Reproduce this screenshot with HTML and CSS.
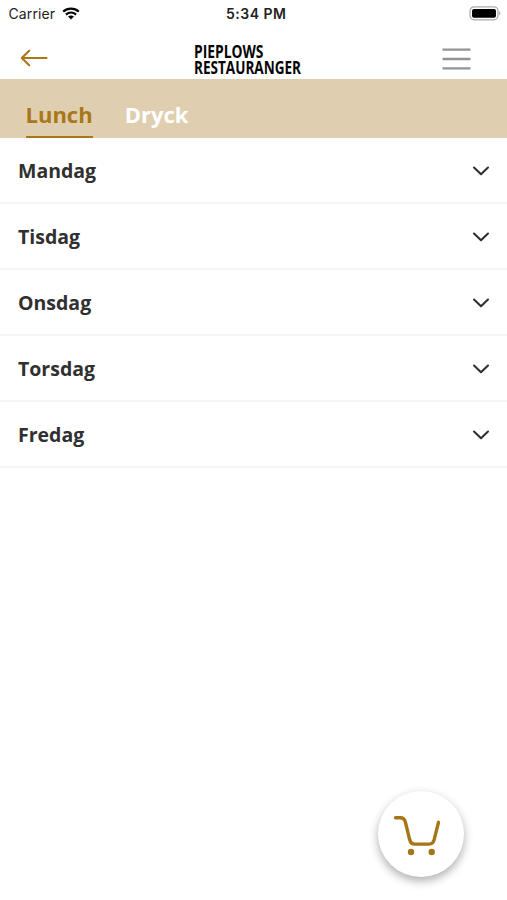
FILE: index.html
```html
<!DOCTYPE html>
<html lang="sv">
<head>
<meta charset="utf-8">
<title>Pieplows Restauranger</title>
<link rel="stylesheet" href="styles.css">
</head>
<body>
<div class="status">
  <div class="carrier"><span>Carrier</span>
    <svg width="18" height="13" viewBox="0 0 18 13" fill="none" stroke="#050505" stroke-width="2.2"><path d="M1.2 4.6C5.6.7 12.4.7 16.8 4.6M3.9 7.6c3-2.6 7.200-2.600 10.200 0"/><path d="M9 12.400 6 9.500c1.700-1.500 4.300-1.500 6 0z" fill="#050505" stroke="none"/></svg>
  </div>
  <div class="time">5:34 PM</div>
  <svg class="battery" width="32" height="15" viewBox="0 0 32 15"><rect x="1" y=".8" width="28" height="13" rx="4" fill="#fff" stroke="#aaa" stroke-width="1.200"/><rect x="3" y="2.900" width="24" height="8.900" rx="2" fill="#000"/><path d="M30.300 5.200c1.400.7 1.400 3.500 0 4.200z" fill="#999"/></svg>
</div>
<header class="header">
  <svg class="back" width="28" height="18" viewBox="0 0 28 18" fill="none" stroke="#a9771a" stroke-width="2.100" stroke-linecap="round" stroke-linejoin="round"><path d="M26.500 9H2M9.200 1.700 1.800 9l7.400 7.300"/></svg>
  <svg class="logo" width="108" height="34" viewBox="0 0 108 34"><text x="0" y="16.300" textLength="69.500" lengthAdjust="spacingAndGlyphs">PIEPLOWS</text><text x="0" y="32.200" textLength="107" lengthAdjust="spacingAndGlyphs">RESTAURANGER</text></svg>
  <svg class="menu" width="29" height="22" viewBox="0 0 29 22"><path d="M.5 1.700h28M.5 11h28M.5 20.300h28" stroke="#939393" stroke-width="2.300"/></svg>
</header>
<nav class="tabs"><span class="tab active">Lunch</span><span class="tab">Dryck</span></nav>
<main>
  <div class="row"><span>Mandag</span><svg class="chev" viewBox="0 0 18 10"><path d="m2 1.500 7 6.700 7-6.700"/></svg></div>
  <div class="row"><span>Tisdag</span><svg class="chev" viewBox="0 0 18 10"><path d="m2 1.500 7 6.700 7-6.700"/></svg></div>
  <div class="row"><span>Onsdag</span><svg class="chev" viewBox="0 0 18 10"><path d="m2 1.500 7 6.700 7-6.700"/></svg></div>
  <div class="row"><span>Torsdag</span><svg class="chev" viewBox="0 0 18 10"><path d="m2 1.500 7 6.700 7-6.700"/></svg></div>
  <div class="row"><span>Fredag</span><svg class="chev" viewBox="0 0 18 10"><path d="m2 1.500 7 6.700 7-6.700"/></svg></div>
</main>
<div class="cart"><svg width="86" height="86" viewBox="0 0 86 86"><path d="M17.500 26.800h4.700c3 0 4.500 1.500 5.200 4.300l4.300 17.700c.8 3 2 4.300 4.800 4.300h14.800c2.800 0 4-1.200 4.800-4.200l4.400-17.600" fill="none" stroke="#a67518" stroke-width="3.400" stroke-linecap="round" stroke-linejoin="round"/><g fill="#a67518"><circle cx="33" cy="61" r="3.200"/><circle cx="53.700" cy="61" r="3.200"/></g></svg></div>
</body>
</html>
```
FILE: styles.css
```css
* { box-sizing: border-box; }
body { margin: 0; height: 900px; overflow: hidden; background: #fff; color: #303030; font-family: "Open Sans", sans-serif; }
svg { display: block; }
.status { height: 28px; display: grid; grid-template-columns: 1fr auto 1fr; align-items: center; padding: 0 6px 1px 8.500px; font-family: Inter, sans-serif; font-size: 14px; color: #222; }
.carrier { display: flex; align-items: center; gap: 7px; letter-spacing: .1px; }
.carrier svg { margin-top: -1px; }
.time { font-size: 14px; font-weight: 600; letter-spacing: .5px; padding-left: 3px; }
.battery { justify-self: end; }
.header { height: 51px; display: flex; align-items: flex-start; padding: 14px 36px 0 20px; }
.back { margin-top: 7px; }
.logo { margin-left: 145.500px; overflow: visible; font: 700 18px "Open Sans", sans-serif; fill: #050505; }
.menu { margin: 6px 0 0 auto; }
.tabs { height: 58.500px; background: #dfcfb0; display: flex; gap: 32px; padding: 19px 25.500px 0; font-size: 22px; font-weight: 700; line-height: 32px; }
.tab { color: #fff; height: 39.500px; }
.active { color: #a9771a; border-bottom: 2.500px solid #a9771a; }
.row { height: 66px; display: flex; align-items: center; justify-content: space-between; padding: 2px 17.500px 0 18px; border-bottom: 2px solid #f5f5f5; font-size: 19.500px; font-weight: 700; }
.chev { width: 18px; height: 10px; fill: none; stroke: #303030; stroke-width: 2.100; stroke-linecap: round; stroke-linejoin: round; }
.cart { position: absolute; left: 378px; top: 791px; width: 86px; height: 86px; border-radius: 50%; background: #fff; box-shadow: 0 4px 10px rgba(0,0,0,.32); }
```
